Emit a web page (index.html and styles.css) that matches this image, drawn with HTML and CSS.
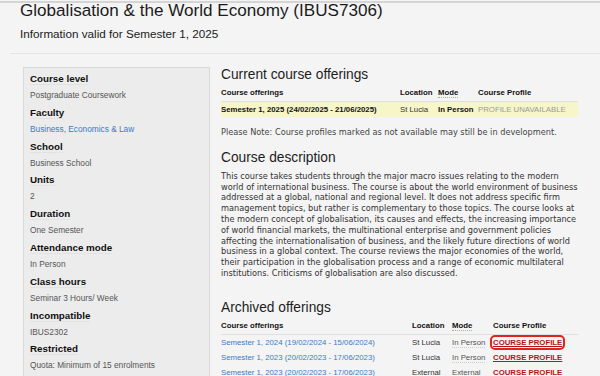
FILE: index.html
```html
<!DOCTYPE html>
<html lang="en">
<head>
    <meta charset="UTF-8">
    <meta name="viewport" content="width=device-width, initial-scale=1.0">
    <title>Globalisation &amp; the World Economy (IBUS7306)</title>
    <link rel="stylesheet" href="styles.css">
</head>
<body>
    <div class="topline"></div>

    <header class="page-head">
        <h1>Globalisation &amp; the World Economy (IBUS7306)</h1>
        <p class="valid">Information valid for Semester 1, 2025</p>
    </header>

    <div class="layout">
        <aside class="summary">
            <dl>
                <dt><span>Course level</span></dt>
                <dd>Postgraduate Coursework</dd>
                <dt><span>Faculty</span></dt>
                <dd><a href="#">Business, Economics &amp; Law</a></dd>
                <dt><span>School</span></dt>
                <dd>Business School</dd>
                <dt><span>Units</span></dt>
                <dd>2</dd>
                <dt><span>Duration</span></dt>
                <dd>One Semester</dd>
                <dt><span>Attendance mode</span></dt>
                <dd>In Person</dd>
                <dt><span>Class hours</span></dt>
                <dd>Seminar 3 Hours/ Week</dd>
                <dt><span>Incompatible</span></dt>
                <dd>IBUS2302</dd>
                <dt><span>Restricted</span></dt>
                <dd>Quota: Minimum of 15 enrolments</dd>
            </dl>
        </aside>

        <main class="content">
            <h2>Current course offerings</h2>
            <table class="offerings current">
                <colgroup>
                    <col class="c-offer">
                    <col class="c-loc">
                    <col class="c-mode">
                    <col>
                </colgroup>
                <thead>
                    <tr>
                        <th>Course offerings</th>
                        <th>Location</th>
                        <th><abbr>Mode</abbr></th>
                        <th>Course Profile</th>
                    </tr>
                </thead>
                <tbody>
                    <tr class="now">
                        <td class="strong">Semester 1, 2025 (24/02/2025 - 21/06/2025)</td>
                        <td class="loc">St Lucia</td>
                        <td class="strong">In Person</td>
                        <td class="unavailable">PROFILE UNAVAILABLE</td>
                    </tr>
                </tbody>
            </table>
            <p class="note">Please Note: Course profiles marked as not available may still be in development.</p>

            <h2 class="section">Course description</h2>
            <p class="desc">This course takes students through the major macro issues relating to the modern world of international business. The course is about the world environment of business addressed at a global, national and regional level. It does not address specific firm management topics, but rather is complementary to those topics. The course looks at the modern concept of globalisation, its causes and effects, the increasing importance of world financial markets, the multinational enterprise and government policies affecting the internationalisation of business, and the likely future directions of world business in a global context. The course reviews the major economies of the world, their participation in the globalisation process and a range of economic multilateral institutions. Criticisms of globalisation are also discussed.</p>

            <h2 class="section archived-title">Archived offerings</h2>
            <table class="offerings archived">
                <colgroup>
                    <col class="a-offer">
                    <col class="a-loc">
                    <col class="a-mode">
                    <col>
                </colgroup>
                <thead>
                    <tr>
                        <th>Course offerings</th>
                        <th>Location</th>
                        <th><abbr>Mode</abbr></th>
                        <th>Course Profile</th>
                    </tr>
                </thead>
                <tbody>
                    <tr>
                        <td><a href="#">Semester 1, 2024 (19/02/2024 - 15/06/2024)</a></td>
                        <td class="loc">St Lucia</td>
                        <td><abbr class="mode">In Person</abbr></td>
                        <td><a href="#" class="profile focused">COURSE PROFILE</a></td>
                    </tr>
                    <tr>
                        <td><a href="#">Semester 1, 2023 (20/02/2023 - 17/06/2023)</a></td>
                        <td class="loc">St Lucia</td>
                        <td><abbr class="mode">In Person</abbr></td>
                        <td><a href="#" class="profile">COURSE PROFILE</a></td>
                    </tr>
                    <tr>
                        <td><a href="#">Semester 1, 2023 (20/02/2023 - 17/06/2023)</a></td>
                        <td class="loc">External</td>
                        <td><abbr class="mode">External</abbr></td>
                        <td><a href="#" class="profile">COURSE PROFILE</a></td>
                    </tr>
                </tbody>
            </table>
        </main>
    </div>
</body>
</html>
```

FILE: styles.css
```css
html, body {
    margin: 0;
    height: 100%;
    overflow: hidden;
}

body {
    background-color: #f4f4f4;
    font-family: "Liberation Sans", Arial, sans-serif;
    color: #222;
}

a {
    color: #3b7bc8;
    text-decoration: none;
}

abbr {
    text-decoration: none;
    border-bottom: 1px dotted #aaa;
}

.topline {
    height: 2px;
    margin-top: 1px;
    background: #d5d5d5;
}

.page-head {
    margin-left: 10px;
    padding: 0 0 12px 10px;
    border-bottom: 1px solid #e4e4e4;
}

h1 {
    margin: 0;
    font-size: 17.1px;
    line-height: 16px;
    font-weight: normal;
    color: #1b1b1b;
}

.valid {
    margin: 8px 0 0;
    font-size: 11.7px;
    line-height: 14px;
    color: #1b1b1b;
}

.layout {
    display: flex;
    align-items: flex-start;
    gap: 11px;
    padding: 13px 0 0 23px;
}

/* left summary box */
.summary {
    box-sizing: border-box;
    width: 187px;
    flex-shrink: 0;
    padding: 3px 6px 60px;
    background: #ececec;
    border: 1px solid #d9d9d9;
}

.summary dl {
    margin: 0;
}

.summary dt {
    font-size: 9.8px;
    line-height: 16px;
    font-weight: bold;
    color: #111;
}

.summary dt span {
    border-bottom: 1px solid #e2e2e2;
}

.summary dd {
    margin: 0;
    font-size: 8.3px;
    line-height: 17.8px;
    color: #555;
}

/* right column */
.content {
    width: 362px;
}

h2 {
    margin: 0 0 6px;
    font-size: 13.75px;
    line-height: 15px;
    font-weight: normal;
    color: #1d1d1d;
}

.section {
    margin-top: 12.5px;
}

.archived-title {
    margin-top: 21.5px;
}

.offerings {
    width: 357px;
    margin-top: 2px;
    border-collapse: collapse;
    table-layout: fixed;
    font-size: 7.8px;
}

.c-offer { width: 179px; }
.c-loc { width: 38px; }
.c-mode { width: 40px; }

.a-offer { width: 191px; }
.a-loc { width: 40px; }
.a-mode { width: 41px; }

.offerings th {
    padding: 0 0 2.5px;
    text-align: left;
    line-height: 10px;
    font-weight: bold;
    color: #111;
    border-bottom: 1px solid #e0e0e0;
    white-space: nowrap;
}

.offerings td {
    padding: 0;
    height: 15px;
    line-height: 15px;
    white-space: nowrap;
    color: #333;
}

.now td {
    background: #f6f6c9;
}

.offerings td.strong {
    font-weight: bold;
    color: #111;
}

.offerings td.loc {
    color: #333;
}

.offerings td.unavailable {
    color: #9a9a9a;
}

.mode {
    color: #555;
    border-bottom-color: #ccc;
}

.profile {
    font-weight: bold;
    color: #b3141d;
    text-decoration: underline;
}

.focused {
    outline: 2px solid #e0231d;
    outline-offset: 1px;
    border-radius: 2px;
}

.note,
.desc {
    font-family: "DejaVu Sans", Verdana, sans-serif;
    font-size: 8.2px;
    line-height: 10.8px;
}

.note {
    margin: 10px 0 0;
    color: #444;
}

.desc {
    width: 359px;
    margin: 0;
    color: #333;
}
```
